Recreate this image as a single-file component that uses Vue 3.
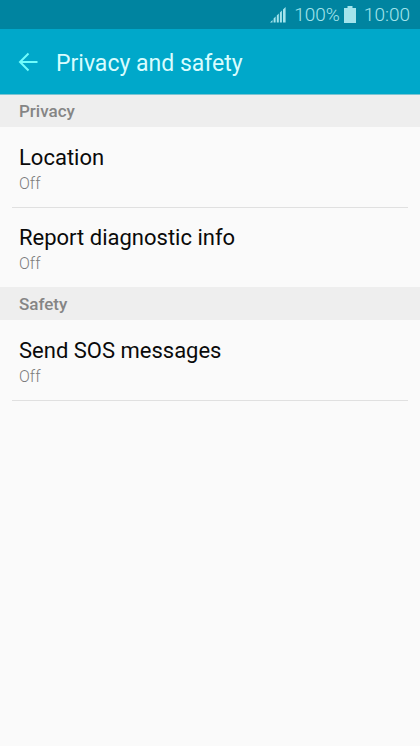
<script setup>
const sections = [
  {
    title: 'Privacy',
    items: [
      { name: 'Location', value: 'Off', divider: true },
      { name: 'Report diagnostic info', value: 'Off', divider: false },
    ],
  },
  {
    title: 'Safety',
    items: [{ name: 'Send SOS messages', value: 'Off', divider: true }],
  },
]
</script>

<template>
  <div class="screen">
    <div class="status">
      <svg class="signal" width="16" height="16" viewBox="0 0 16 16" aria-hidden="true">
        <path d="M0 15.500l2.500-2.500v2.500zM3.600 15.500v-4l2-2v6zM6.800 15.500V8.500l2-2v9zM9.900 15.500V5.500l2-2v12zM13 15.500V2.500L15.600 0v15.500z" />
      </svg>
      <span class="percent">100%</span>
      <svg class="battery" width="12" height="17" viewBox="0 0 12 17" aria-hidden="true">
        <path d="M3.500 0h5v2H12v15H0V2h3.500z" />
      </svg>
      <span class="time">10:00</span>
    </div>
    <header class="bar">
      <button class="back" type="button" aria-label="Back">
        <svg width="20" height="20" viewBox="0 0 20 20" aria-hidden="true">
          <path d="M19.500 10H2M10.500 1.500L2 10l8.500 8.500" />
        </svg>
      </button>
      <h1>Privacy and safety</h1>
    </header>
    <main>
      <section v-for="section in sections" :key="section.title">
        <h2>{{ section.title }}</h2>
        <ul>
          <li v-for="item in section.items" :key="item.name" :class="{ divided: item.divider }">
            <button class="row" type="button">
              <span class="name">{{ item.name }}</span>
              <span class="value">{{ item.value }}</span>
            </button>
          </li>
        </ul>
      </section>
    </main>
  </div>
</template>

<style>
body {
  margin: 0;
  background: #fafafa;
}
</style>

<style scoped>
.screen {
  min-height: 100vh;
  background: #fafafa;
  font-family: Roboto, sans-serif;
}
.status {
  display: flex;
  align-items: center;
  justify-content: flex-end;
  box-sizing: border-box;
  height: 29px;
  padding: 0 10px 0 0;
  background: #0084a0;
  color: #a4e4ec;
  font-size: 19px;
  font-weight: 300;
  line-height: 29px;
}
.status svg {
  fill: #a4e4ec;
}
.percent {
  margin-left: 8px;
}
.battery {
  margin-left: 4px;
}
.time {
  margin-left: 8px;
}
.bar {
  position: relative;
  display: flex;
  align-items: center;
  box-sizing: border-box;
  height: 65px;
  padding: 0 18px;
  background: #00a8ca;
  box-shadow: 0 1px 0 #7cc4d2;
}
.back {
  display: flex;
  margin: 0;
  padding: 0;
  border: 0;
  background: none;
}
.back path {
  fill: none;
  stroke: #70fcfc;
  stroke-width: 2;
}
h1 {
  margin: 0 0 0 18px;
  padding-top: 4px;
  color: #d8fcfe;
  font-size: 23px;
  font-weight: 400;
  line-height: 28px;
}
h2 {
  margin: 0;
  padding: 1px 19px 0;
  background: #eeeeee;
  color: #858585;
  font-size: 17px;
  font-weight: 500;
  line-height: 32px;
}
ul {
  margin: 0;
  padding: 0;
  list-style: none;
}
.divided::after {
  content: '';
  display: block;
  height: 1px;
  margin: 0 12px -1px;
  background: #e0e0e0;
}
.row {
  display: flex;
  flex-direction: column;
  box-sizing: border-box;
  width: 100%;
  height: 80px;
  margin: 0;
  padding: 17px 19px 0;
  border: 0;
  background: none;
  font-family: inherit;
  text-align: left;
}
.name {
  color: #0a0a0a;
  font-size: 22px;
  line-height: 28px;
}
.value {
  color: #7c7c7c;
  font-size: 16px;
  font-weight: 300;
  line-height: 24px;
}
</style>
